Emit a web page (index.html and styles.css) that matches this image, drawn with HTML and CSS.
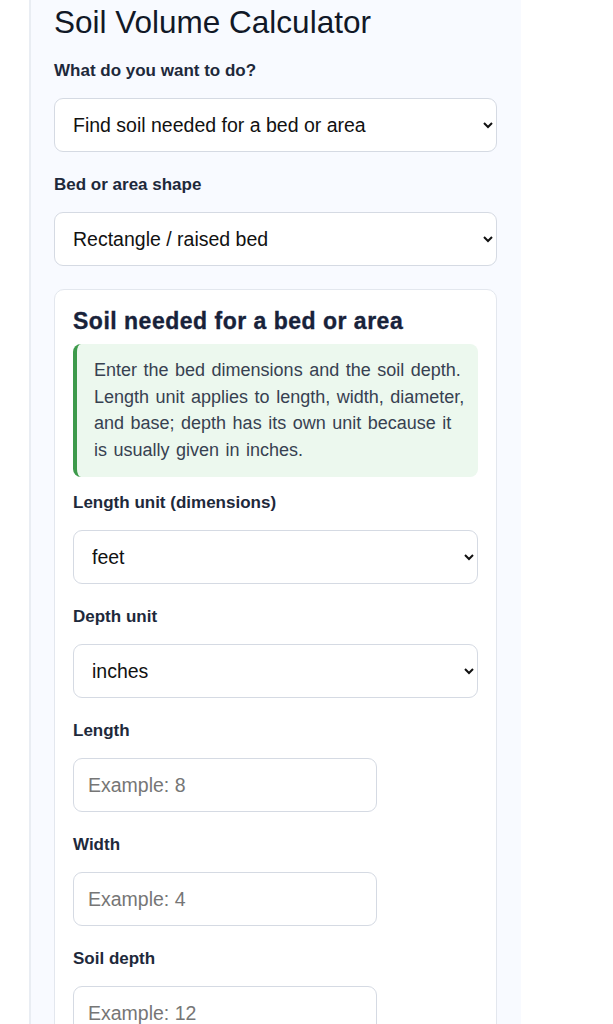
FILE: index.html
```html
<!DOCTYPE html>
<html lang="en">
<head>
<meta charset="utf-8">
<title>Soil Volume Calculator</title>
<link rel="stylesheet" href="styles.css">
</head>
<body>
<main class="calc">
  <h1 class="calc-title">Soil Volume Calculator</h1>
  <div class="field">
    <label class="field-label" for="mode">What do you want to do?</label>
    <select id="mode" class="control control-select">
      <option>Find soil needed for a bed or area</option>
    </select>
  </div>
  <div class="field">
    <label class="field-label" for="shape">Bed or area shape</label>
    <select id="shape" class="control control-select">
      <option>Rectangle / raised bed</option>
    </select>
  </div>
  <section class="card">
    <h2 class="card-title">Soil needed for a bed or area</h2>
    <p class="note">Enter the bed dimensions and the soil depth. Length unit applies to length, width, diameter, and base; depth has its own unit because it is usually given in inches.</p>
    <div class="field field-first">
      <label class="field-label" for="lu">Length unit (dimensions)</label>
      <select id="lu" class="control control-select"><option>feet</option></select>
    </div>
    <div class="field">
      <label class="field-label" for="du">Depth unit</label>
      <select id="du" class="control control-select"><option>inches</option></select>
    </div>
    <div class="field">
      <label class="field-label" for="len">Length</label>
      <input id="len" class="control control-input" type="text" placeholder="Example: 8">
    </div>
    <div class="field">
      <label class="field-label" for="wid">Width</label>
      <input id="wid" class="control control-input" type="text" placeholder="Example: 4">
    </div>
    <div class="field">
      <label class="field-label" for="dep">Soil depth</label>
      <input id="dep" class="control control-input" type="text" placeholder="Example: 12">
    </div>
  </section>
</main>
</body>
</html>
```

FILE: styles.css
```css
html, body {
  margin: 0;
  padding: 0;
  background: #ffffff;
}
body {
  font-family: "Liberation Sans", Arial, sans-serif;
  color: #1f2937;
}
.calc {
  box-sizing: border-box;
  width: 492px;
  margin-left: 29px;
  margin-top: -14px;
  padding: 16px 24px 40px 23px;
  background: #f8faff;
  border-left: 2px solid #e9edf3;
}
.calc-title {
  margin: 0 0 19px 0;
  font-size: 31.5px;
  line-height: 40px;
  font-weight: 400;
  color: #111827;
}
.field {
  margin-top: 23px;
}
.calc-title + .field {
  margin-top: 0;
}
.field-label {
  display: block;
  font-size: 17px;
  line-height: 20px;
  font-weight: 700;
  color: #1e293b;
  margin-bottom: 17px;
}
.control {
  box-sizing: border-box;
  display: block;
  height: 54px;
  border: 1px solid #d5dae3;
  border-radius: 9px;
  background: #ffffff;
  font-family: "Liberation Sans", Arial, sans-serif;
  font-size: 19.5px;
  color: #111111;
  padding: 0 10px 0 14px;
}
.control-select {
  width: 100%;
}
.control-input {
  width: 304px;
}
.control-input::placeholder {
  color: #767676;
}
.card {
  margin-top: 23px;
  background: #ffffff;
  border: 1px solid #e3e7ee;
  border-radius: 10px;
  padding: 17px 18px 40px 18px;
}
.card-title {
  margin: 0;
  font-size: 23px;
  line-height: 28px;
  font-weight: 700;
  letter-spacing: 0.5px;
  color: #18223a;
  -webkit-text-stroke: 0.35px #18223a;
}
.note {
  margin: 9px 0 0 0;
  padding: 13px 10px 14px 17px;
  background: #ecf8ee;
  border-left: 4px solid #3d9a4b;
  border-radius: 8px;
  font-size: 18px;
  line-height: 26.5px;
  word-spacing: 1.5px;
  color: #374151;
}
.field-first {
  margin-top: 16px;
}
```
